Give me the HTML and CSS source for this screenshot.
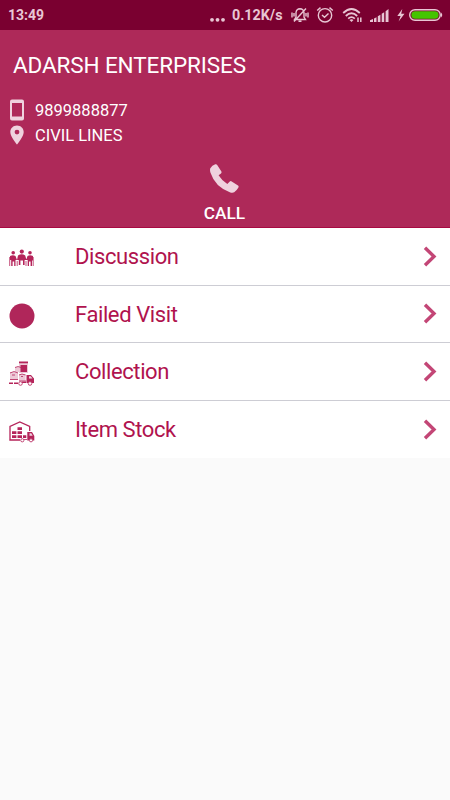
FILE: index.html
```html
<!DOCTYPE html>
<html lang="en">
<head>
    <meta charset="UTF-8">
    <meta name="viewport" content="width=device-width, initial-scale=1.0">
    <title>Adarsh Enterprises</title>
    <link rel="stylesheet" href="styles.css">
</head>
<body>
    <div class="status-bar">
        <span class="time">13:49</span>
        <div class="status-right">
            <svg class="dots" width="15" height="30" viewBox="0 0 15 30"><circle cx="2" cy="19.8" r="1.9"/><circle cx="7.5" cy="19.8" r="1.9"/><circle cx="13" cy="19.8" r="1.9"/></svg>
            <span class="speed">0.12K/s</span>
            <svg class="mute line" width="18" height="30" viewBox="0 0 18 30">
                <path d="M3.5 19.5L5 17V12.5Q5.5 9 9 8.8Q12.5 9 13 12.5V17L14.5 19.5ZM7.5 21.2H10.5M1 12.5V17.5M17 12.5V17.5M3 13V16.5M15 13V16.5M3 21.5L15 8.5"/>
            </svg>
            <svg class="alarm line" width="18" height="30" viewBox="0 0 18 30">
                <circle cx="9" cy="15.3" r="6.7"/><path d="M6 15L8.5 17.3L12.5 13.5M1.2 10.5L4.5 7.6M16.8 10.5L13.5 7.6"/>
            </svg>
            <svg class="wifi" width="21" height="30" viewBox="0 0 21 30">
                <path class="arc" d="M1.2 13Q9.5 5 17.8 13M3.8 16Q9.5 10.5 15.2 16M6.2 18.6Q9.5 15.7 12.8 18.6"/>
                <path d="M7.5 20Q9.5 18.3 11.5 20L9.5 22Z"/>
                <path class="updown" d="M16 17.5V22M18.8 17.5V22"/>
            </svg>
            <svg class="signal" width="19" height="30" viewBox="0 0 19 30">
                <path d="M0 22V20.3L3 19V22ZM4 22V18.4L6.5 17.2V22ZM7.8 22V16.2L10.4 14.8V22ZM11.7 22V13.8L14.2 12.2V22ZM15.6 22V11.2L18.5 9V22Z"/>
            </svg>
            <svg class="bolt" width="8" height="30" viewBox="0 0 8 30"><path d="M5.3 9L.3 16H3.6L1.6 21.5L7.5 13.7H4.2Z"/></svg>
            <svg class="battery" width="34" height="30" viewBox="0 0 34 30">
                <rect class="case" x=".7" y="9.7" width="30.6" height="10.6" rx="5.3"/>
                <rect class="charge" x="2.4" y="11.3" width="27.2" height="7.4" rx="3.7"/>
                <path d="M32 12.5Q34.5 15 32 17.5Z"/>
            </svg>
        </div>
    </div>

    <div class="header">
        <h1>ADARSH ENTERPRISES</h1>
        <div class="info">
            <svg width="14" height="22" viewBox="0 0 14 22"><path fill-rule="evenodd" d="M2 .5H12Q14 .5 14 2.5V19.5Q14 21.5 12 21.5H2Q0 21.5 0 19.5V2.5Q0 .5 2 .5ZM2 4V17.5H12V4Z"/></svg>
            <span>9899888877</span>
        </div>
        <div class="info">
            <svg width="14" height="20" viewBox="0 0 14 20"><path fill-rule="evenodd" d="M7 .5C3.2 .5 .3 3.4 .3 7C.3 11.8 7 19.5 7 19.5S13.7 11.8 13.7 7C13.7 3.4 10.8 .5 7 .5ZM7 4.7A2.4 2.4 0 1 1 7 9.5A2.4 2.4 0 1 1 7 4.7Z"/></svg>
            <span>CIVIL LINES</span>
        </div>
        <div class="call">
            <svg width="29" height="29" viewBox="0 0 29 29"><path d="M.3 4.2Q2 1.2 5.3 .2Q6.6 -.1 7.2 1L11.4 7.6Q11.9 8.7 11 9.4L8.6 11.3Q11.8 16.6 17.3 20L19.8 17.5Q20.7 16.8 21.7 17.4L28 21.6Q29 22.3 28.4 23.4Q26.6 26.6 24.2 28.2Q22.8 29 20.3 28.4Q5.3 23.6 .4 8.6Q-.3 6 .3 4.2Z"/></svg>
            <span>CALL</span>
        </div>
    </div>

    <div class="menu">
        <div class="item">
            <svg class="icon" width="26" height="26" viewBox="0 0 26 26">
                <circle cx="4.2" cy="6.8" r="1.8"/><circle cx="12.8" cy="5.6" r="2.1"/><circle cx="21" cy="6.8" r="1.8"/>
                <path d="M1 10Q4 8.5 6.5 10L8 14H6.5V20H5.2V15.5H3.6V20H2.2V14H1ZM9 9.5Q12.8 7.2 16.2 9.5L17.5 14H15.6V19H14V14.5H11.4V19H9.8V14H8ZM18.5 10Q21 8.5 24 10V14.5H23V20H21.6V15.5H20V20H18.7V14H17.2Z"/>
                <path class="thin" d="M.7 11V20M24.2 11V20M8.2 15V20M17 15V20"/>
            </svg>
            <span class="label">Discussion</span>
            <svg class="arrow" width="14" height="21" viewBox="0 0 14 21"><path d="M2 1.7L11 10.5L2 19.3"/></svg>
        </div>
        <div class="item">
            <svg class="icon" width="26" height="26" viewBox="0 0 26 26"><circle class="disc" cx="13" cy="13" r="12.5"/></svg>
            <span class="label">Failed Visit</span>
            <svg class="arrow" width="14" height="21" viewBox="0 0 14 21"><path d="M2 1.7L11 10.5L2 19.3"/></svg>
        </div>
        <div class="item">
            <svg class="icon" width="26" height="26" viewBox="0 0 26 26">
                <path class="pale" d="M10 1.5H19V12H10ZM6 6H12V11H6ZM1 11H9V19H1ZM10 13H16.5V20H10Z"/>
                <path d="M10 .5H19V2.3H10ZM11.5 4H18V11H11.5ZM17.5 14H22L25 17.5V22H17.5ZM0 21.5H4V23H0ZM5 21.5H9V23H5ZM13 20.5H17V22H13Z"/>
                <path class="thin" d="M6 6.5L9 5.5L12 6.5M1 12L5 10.5L9 12M3 14H6M1 18.5H9M10 14L13 13L16.5 14M12 15.5H14M10 20H17"/>
                <circle class="wheel" cx="11.5" cy="22.5" r="1.8"/><circle class="wheel" cx="21" cy="22.5" r="1.8"/>
                <path class="glass" d="M20 15.2H21.8L23.5 17.5H20Z"/>
            </svg>
            <span class="label">Collection</span>
            <svg class="arrow" width="14" height="21" viewBox="0 0 14 21"><path d="M2 1.7L11 10.5L2 19.3"/></svg>
        </div>
        <div class="item">
            <svg class="icon" width="26" height="26" viewBox="0 0 26 26">
                <path class="wall" d="M1 21V7.5L10.8 3L20.7 7.5V12M.3 21H11"/>
                <path d="M8.5 8.2H13V11H8.5ZM3 12.2H7.4V15H3ZM8.5 12.2H13V15H8.5ZM3 16.2H7.4V19H3ZM8.5 16.2H13V19H8.5ZM14 16.2H17.3V19H14ZM18.3 13H23L25.3 17V21.5H18.3Z"/>
                <path class="thin" d="M12 20.5H18"/>
                <circle class="wheel" cx="13.3" cy="21.3" r="1.6"/><circle class="wheel" cx="22" cy="21.3" r="1.6"/>
                <path class="glass" d="M20.5 14.3H22.3L23.7 16.7H20.5Z"/>
            </svg>
            <span class="label">Item Stock</span>
            <svg class="arrow" width="14" height="21" viewBox="0 0 14 21"><path d="M2 1.7L11 10.5L2 19.3"/></svg>
        </div>
    </div>
</body>
</html>
```
FILE: styles.css
```css
* {
  box-sizing: border-box;
}
body {
  margin: 0;
  min-height: 100vh;
  font-family: Roboto, sans-serif;
  background-color: #fafafa;
}
svg {
  display: block;
  flex: none;
}
.status-bar {
  display: flex;
  justify-content: space-between;
  height: 30px;
  padding: 0 7px 0 8px;
  line-height: 31px;
  font-size: 14px;
  font-weight: 700;
  color: #e8c6d4;
  background-color: #7a0030;
}
.status-right {
  display: flex;
}
.status-right svg {
  fill: #e8c6d4;
}
.speed {
  width: 52px;
  margin-left: 7px;
  font-size: 14.3px;
}
.status-right .line {
  fill: none;
  stroke: #e8c6d4;
  stroke-width: 1.4;
}
.mute {
  margin-left: 7px;
}
.alarm {
  margin-left: 7px;
}
.wifi {
  margin-left: 8px;
}
.arc {
  fill: none;
  stroke: #e8c6d4;
  stroke-width: 1.8;
}
.updown {
  stroke: #e8c6d4;
  stroke-width: 1.5;
}
.signal {
  margin-left: 7px;
}
.bolt {
  margin-left: 8px;
}
.battery {
  margin-left: 4px;
}
.case {
  fill: none;
  stroke: #e8c6d4;
  stroke-width: 1.4;
}
.charge {
  fill: #44c400;
}
.header {
  height: 198px;
  padding-top: 20px;
  color: #fff;
  background-color: #ae2959;
  border-bottom: 1px solid #a80a42;
}
.header svg {
  fill: #efd2de;
}
.header h1 {
  margin: 0 0 16px 13px;
  font-size: 22.5px;
  line-height: 31px;
  font-weight: 400;
  letter-spacing: -0.12px;
}
.info {
  display: flex;
  align-items: center;
  gap: 11px;
  height: 25px;
  padding-left: 10px;
  font-size: 16.5px;
}
.info span {
  padding-top: 1px;
}
.call {
  display: flex;
  flex-direction: column;
  align-items: center;
  margin-top: 17px;
  padding-right: 1px;
  font-size: 17.3px;
  line-height: 20px;
  font-weight: 500;
}
.call span {
  margin-top: 10px;
}
.item {
  display: flex;
  align-items: center;
  height: 57.5px;
  padding: 0 13px 0 9px;
  background-color: #fff;
  border-bottom: 1px solid #cdcdd4;
}
.item:last-child {
  height: 57px;
  border-bottom: none;
}
.icon {
  margin-top: 5px;
  fill: #b5245a;
}
.label {
  flex: 1;
  margin-left: 40px;
  padding-top: 1px;
  font-size: 22px;
  letter-spacing: -0.4px;
  color: #b0134e;
}
.arrow {
  fill: none;
  stroke: #c34676;
  stroke-width: 3.4;
}
.disc {
  fill: #b0265a;
}
.thin {
  fill: none;
  stroke: #b5245a;
  stroke-width: 0.8;
}
.pale {
  fill: #edc9d7;
}
.wall {
  fill: none;
  stroke: #b5245a;
  stroke-width: 1.3;
}
.wheel {
  fill: #fff;
  stroke: #c34676;
  stroke-width: 1;
}
.glass {
  fill: #efd2de;
}
```
